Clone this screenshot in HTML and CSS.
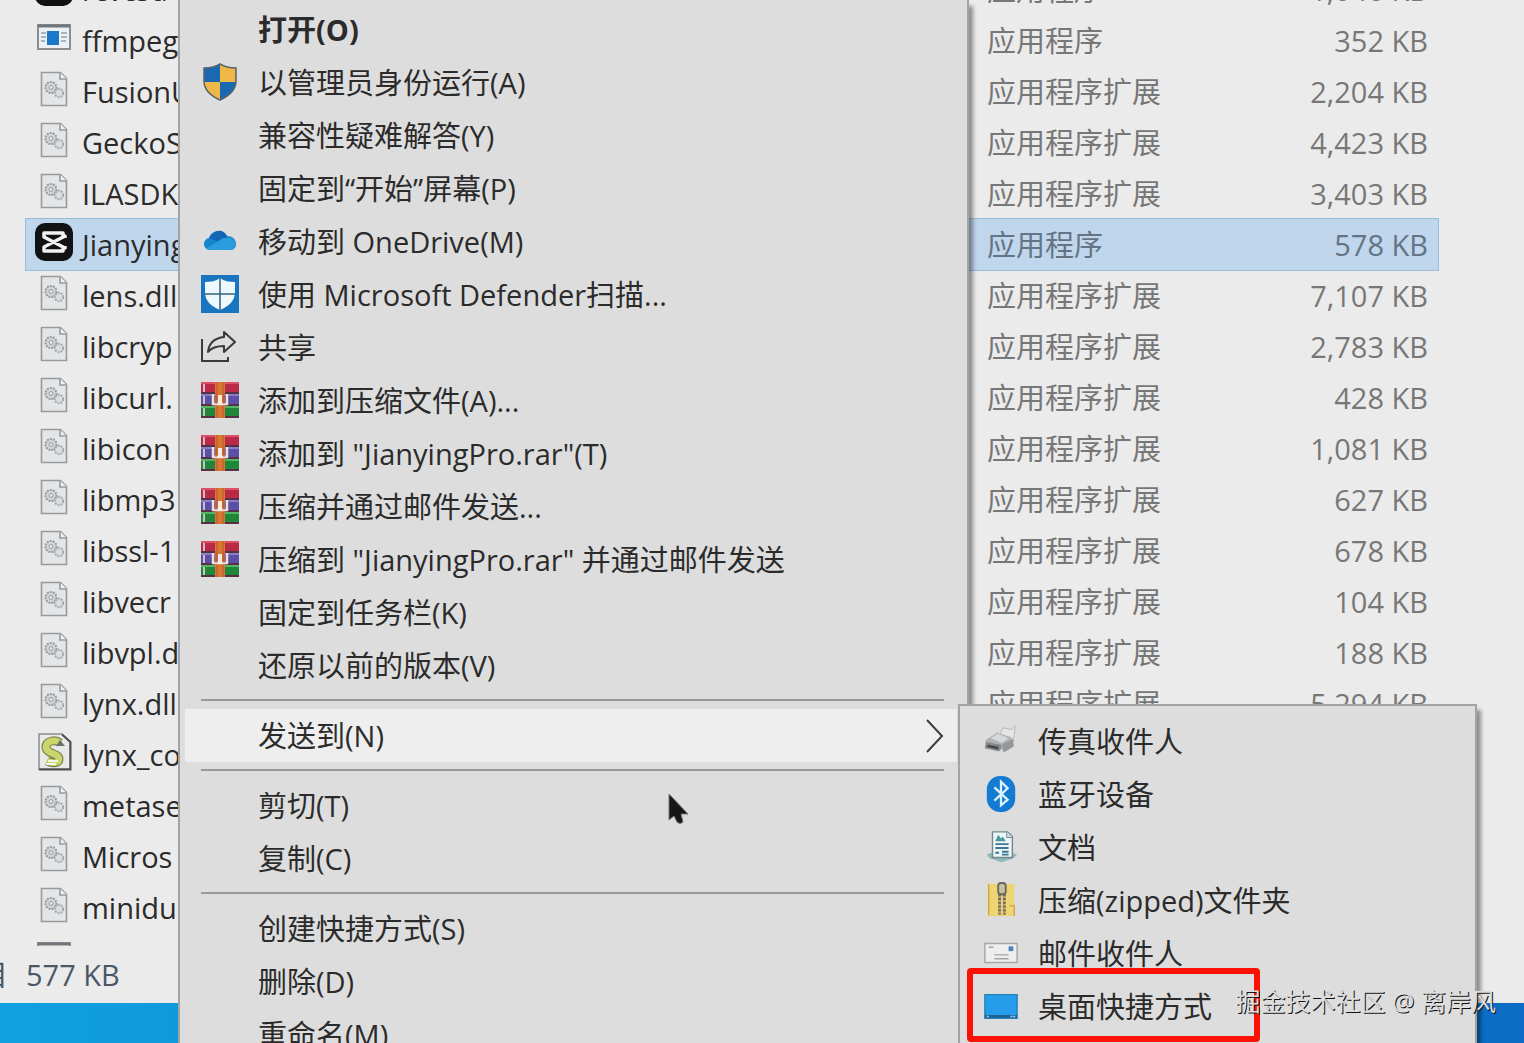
FILE: index.html
```html
<!DOCTYPE html>
<html lang="zh-CN">
<head>
    <title>JianyingPro</title>
    <meta charset="utf-8">
    <link rel="stylesheet" href="styles.css">
</head>
<body>
    <!-- shared icons -->
    <svg class="defs" width="0" height="0" aria-hidden="true">
        <symbol id="dll" viewBox="0 0 38 38">
            <path d="M6.500 2.500h19l6 6v27h-25z" fill="#e4e5e6" stroke="#969a9d" stroke-width="1.600"/>
            <path d="M25 2.500v6.500h6.500" fill="#f1f1f1" stroke="#969a9d" stroke-width="1.600"/>
            <circle cx="16" cy="17.500" r="5.500" fill="#d3d6d8" stroke="#979c9f" stroke-width="2" stroke-dasharray="2 1"/>
            <circle cx="16" cy="17.500" r="2" fill="#e6e6e6" stroke="#979c9f"/>
            <circle cx="24" cy="23" r="4.200" fill="#d9dfe1" stroke="#a2abaf" stroke-width="2" stroke-dasharray="2 1"/>
        </symbol>
        <symbol id="exe" viewBox="0 0 38 38">
            <path d="M3 6h32v24H3z" fill="#edf1f3" stroke="#898e92" stroke-width="2"/>
            <path d="M3 7h32" stroke="#70767b" stroke-width="3"/>
            <path d="M6 14h5M6 18h5M6 22h4M26 14h6M26 18h6M26 22h5" stroke="#92a0ab" stroke-width="1.500"/>
            <path d="M12 12h12v14H12z" fill="#1979c8"/>
        </symbol>
        <symbol id="capcut" viewBox="0 0 38 38">
            <rect width="38" height="38" rx="10" fill="#101214"/>
            <path d="M28 13v-3H9v4l21 11v-2M28 25v3H9v-4l21-11v2" fill="none" stroke="#f2f2f2" stroke-width="3.500" stroke-linejoin="round"/>
        </symbol>
        <symbol id="script" viewBox="0 0 38 38">
            <path d="M4 1h23l8 8v27H4z" fill="#e9eae8" stroke="#8b8e90" stroke-width="1.500"/>
            <path d="M4 36.500h31.500V9L27 1.500" fill="none" stroke="#4d5052" stroke-width="2"/>
            <path d="M25 10c-5-4-14-2-14 4 0 7 13 6 13 12 0 4-6 5-12 2" fill="none" stroke="#7b8553" stroke-width="9"/>
            <path d="M25 10c-5-4-14-2-14 4 0 7 13 6 13 12 0 4-6 5-12 2" fill="none" stroke="#cad66a" stroke-width="6.500"/>
            <path d="M21 13l4-6 5 6z" fill="#6a7166"/>
            <path d="M13 28h10M11 31h10" stroke="#f5f6e9" stroke-width="2"/>
        </symbol>
        <symbol id="rar" viewBox="0 0 38 38">
            <path d="M0 1h38v12H0z" fill="#ba2946"/>
            <path d="M0 13h38v12H0z" fill="#5b50a6"/>
            <path d="M0 25h38v12H0z" fill="#20863a"/>
            <path d="M0 2h38" stroke="#db5268" stroke-width="2"/>
            <path d="M0 14h38" stroke="#8880c4" stroke-width="2"/>
            <path d="M0 26h38" stroke="#55b668" stroke-width="2"/>
            <path d="M0 12h38M0 24h38M0 36h38" stroke="#563044" stroke-width="2"/>
            <path d="M3 3v8M3 15v8M3 27v8" stroke="#d1bbc8" stroke-width="2"/>
            <path d="M14 1h10v36H14z" fill="#d77734"/>
            <path d="M16 1v36M22 1v36" stroke="#bf5728"/>
            <path d="M12 13v10h14V13" fill="none" stroke="#eee1db" stroke-width="2.500"/>
            <path d="M19 14v10" stroke="#f5eae2" stroke-width="4"/>
            <path d="M15 13v10M23 13v10" stroke="#a45a45"/>
        </symbol>
    </svg>

    <main class="window">
        <div class="file-list">
            <table class="files">
                <tr><td class="name"><span class="file"><svg class="icon"><use href="#capcut"/></svg>rcvcsd</span></td><td class="type">应用程序</td><td class="size">1,046 KB</td></tr>
                <tr><td class="name"><span class="file"><svg class="icon"><use href="#exe"/></svg>ffmpeg</span></td><td class="type">应用程序</td><td class="size">352 KB</td></tr>
                <tr><td class="name"><span class="file"><svg class="icon"><use href="#dll"/></svg>FusionU</span></td><td class="type">应用程序扩展</td><td class="size">2,204 KB</td></tr>
                <tr><td class="name"><span class="file"><svg class="icon"><use href="#dll"/></svg>GeckoS</span></td><td class="type">应用程序扩展</td><td class="size">4,423 KB</td></tr>
                <tr><td class="name"><span class="file"><svg class="icon"><use href="#dll"/></svg>ILASDK</span></td><td class="type">应用程序扩展</td><td class="size">3,403 KB</td></tr>
                <tr class="selected"><td class="name"><span class="file"><svg class="icon"><use href="#capcut"/></svg>Jianying</span></td><td class="type">应用程序</td><td class="size">578 KB</td></tr>
                <tr><td class="name"><span class="file"><svg class="icon"><use href="#dll"/></svg>lens.dll</span></td><td class="type">应用程序扩展</td><td class="size">7,107 KB</td></tr>
                <tr><td class="name"><span class="file"><svg class="icon"><use href="#dll"/></svg>libcryp</span></td><td class="type">应用程序扩展</td><td class="size">2,783 KB</td></tr>
                <tr><td class="name"><span class="file"><svg class="icon"><use href="#dll"/></svg>libcurl.</span></td><td class="type">应用程序扩展</td><td class="size">428 KB</td></tr>
                <tr><td class="name"><span class="file"><svg class="icon"><use href="#dll"/></svg>libicon</span></td><td class="type">应用程序扩展</td><td class="size">1,081 KB</td></tr>
                <tr><td class="name"><span class="file"><svg class="icon"><use href="#dll"/></svg>libmp3</span></td><td class="type">应用程序扩展</td><td class="size">627 KB</td></tr>
                <tr><td class="name"><span class="file"><svg class="icon"><use href="#dll"/></svg>libssl-1</span></td><td class="type">应用程序扩展</td><td class="size">678 KB</td></tr>
                <tr><td class="name"><span class="file"><svg class="icon"><use href="#dll"/></svg>libvecr</span></td><td class="type">应用程序扩展</td><td class="size">104 KB</td></tr>
                <tr><td class="name"><span class="file"><svg class="icon"><use href="#dll"/></svg>libvpl.d</span></td><td class="type">应用程序扩展</td><td class="size">188 KB</td></tr>
                <tr><td class="name"><span class="file"><svg class="icon"><use href="#dll"/></svg>lynx.dll</span></td><td class="type">应用程序扩展</td><td class="size">5,294 KB</td></tr>
                <tr><td class="name"><span class="file"><svg class="icon"><use href="#script"/></svg>lynx_co</span></td><td></td><td></td></tr>
                <tr><td class="name"><span class="file"><svg class="icon"><use href="#dll"/></svg>metase</span></td><td></td><td></td></tr>
                <tr><td class="name"><span class="file"><svg class="icon"><use href="#dll"/></svg>Micros</span></td><td></td><td></td></tr>
                <tr><td class="name"><span class="file"><svg class="icon"><use href="#dll"/></svg>minidu</span></td><td></td><td></td></tr>
                <tr><td class="name"><span class="file"><svg class="icon"><use href="#exe"/></svg></span></td><td></td><td></td></tr>
            </table>
        </div>
        <footer class="status-bar"><span>目</span><span>577 KB</span></footer>
    </main>

    <!-- right click menu -->
    <div class="menu context-menu">
        <button class="item default"><span class="label">打开(O)</span></button>
        <button class="item">
            <svg class="icon" viewBox="0 0 38 38">
                <path d="M19 1c5 3 10 4 16 4v13c0 9-7 15-16 19C10 33 3 27 3 18V5c6 0 11-1 16-4z" fill="#efb745"/>
                <path d="M19 1v18H3V5c6 0 11-1 16-4zM19 19h16c-1 9-7 14-16 18z" fill="#1b68b2"/>
                <path d="M19 1c5 3 10 4 16 4v13c0 9-7 15-16 19C10 33 3 27 3 18V5c6 0 11-1 16-4z" fill="none" stroke="#58636a" stroke-width="1.500"/>
            </svg>
            <span class="label">以管理员身份运行(A)</span>
        </button>
        <button class="item"><span class="label">兼容性疑难解答(Y)</span></button>
        <button class="item"><span class="label">固定到“开始”屏幕(P)</span></button>
        <button class="item">
            <svg class="icon" viewBox="0 0 38 38">
                <path d="M10 28a6 6 0 0 1-2-12c2-8 14-10 18-2 5 0 9 3 9 8 0 4-3 6-6 6z" fill="#1685cc"/>
                <path d="M12 12c4-5 11-4 14 2l2 4-10 2-10-4z" fill="#1266b3"/>
                <path d="M6 26l13-8c4-3 9-3 12-1 6 4 4 11-2 11H10c-2 0-3 0-4-2z" fill="#2a9ddd"/>
            </svg>
            <span class="label">移动到 OneDrive(M)</span>
        </button>
        <button class="item">
            <svg class="icon" viewBox="0 0 38 38">
                <path d="M0 0h38v38H0z" fill="#1975bf"/>
                <path d="M19 3c4 3 9 4 15 4v10c0 9-6 14-15 18C10 31 4 26 4 17V7c6 0 11-1 15-4z" fill="#edf9fc"/>
                <path d="M19 3v32M4 19h30" stroke="#35617e" stroke-width="1.500"/>
            </svg>
            <span class="label">使用 Microsoft Defender扫描...</span>
        </button>
        <button class="item">
            <svg class="icon" viewBox="0 0 38 38" fill="none" stroke="#37393b" stroke-width="2">
                <path d="M1 11v22h26v-4"/>
                <path d="M23 4l11 10-11 10v-6c-7 0-12 1-16 6 1-9 7-14 16-15z" stroke-linejoin="round"/>
            </svg>
            <span class="label">共享</span>
        </button>
        <button class="item"><svg class="icon"><use href="#rar"/></svg><span class="label">添加到压缩文件(A)...</span></button>
        <button class="item"><svg class="icon"><use href="#rar"/></svg><span class="label">添加到 "JianyingPro.rar"(T)</span></button>
        <button class="item"><svg class="icon"><use href="#rar"/></svg><span class="label">压缩并通过邮件发送...</span></button>
        <button class="item"><svg class="icon"><use href="#rar"/></svg><span class="label">压缩到 "JianyingPro.rar" 并通过邮件发送</span></button>
        <button class="item"><span class="label">固定到任务栏(K)</span></button>
        <button class="item"><span class="label">还原以前的版本(V)</span></button>
        <hr>
        <button class="item active">
            <span class="label">发送到(N)</span>
            <svg class="chevron" viewBox="0 0 20 34"><path d="M2 1l15 16L2 33" fill="none" stroke="#3c3c3c" stroke-width="2"/></svg>
        </button>
        <hr>
        <button class="item"><span class="label">剪切(T)</span></button>
        <button class="item"><span class="label">复制(C)</span></button>
        <hr>
        <button class="item"><span class="label">创建快捷方式(S)</span></button>
        <button class="item"><span class="label">删除(D)</span></button>
        <button class="item"><span class="label">重命名(M)</span></button>
    </div>

    <!-- send to -->
    <div class="menu send-menu">
        <button class="item">
            <svg class="icon" viewBox="0 0 38 38">
                <path d="M17 14l4-9 9 2 4-4-2 16-8 5z" fill="#e6e6e6" stroke="#b3b5b6"/>
                <path d="M3 18l12-8 15 5 3 9-9 6L3 26z" fill="#aeb0b1"/>
                <path d="M8 16l8-5 11 5-7 5z" fill="#d6d7d8"/>
                <path d="M3 20l16 3v8L2 27z" fill="#85888a"/>
                <path d="M5 23l11 2v3L4 25z" fill="#424648"/>
                <path d="M3 28l14 3 3-3" fill="none" stroke="#d7d8d8" stroke-width="2"/>
                <path d="M20 23l12-6v8l-10 6z" fill="#949799"/>
            </svg>
            <span class="label">传真收件人</span>
        </button>
        <button class="item">
            <svg class="icon" viewBox="0 0 38 38">
                <rect x="4" width="30" height="38" rx="14" fill="#147bd2"/>
                <path d="M12 12l14 13-7 6V6l7 7-14 13" fill="none" stroke="#dbf2fc" stroke-width="2.400"/>
            </svg>
            <span class="label">蓝牙设备</span>
        </button>
        <button class="item">
            <svg class="icon" viewBox="0 0 38 38">
                <path d="M4 27l5-2h21l6 2-4 4-12 4-13-4z" fill="#91b6b9"/>
                <path d="M10 3h16l5 5v22H10z" fill="#edf6f6" stroke="#74898f" stroke-width="1.500"/>
                <path d="M25 3v6h6" fill="#cbdde0" stroke="#74898f"/>
                <path d="M13 13l3-7 3 4 2-2 3 5z" fill="#4b9a9b"/>
                <path d="M13 16h14M13 20h14M20 24h7M20 27h7M13 25h4" stroke="#3e788f" stroke-width="2"/>
            </svg>
            <span class="label">文档</span>
        </button>
        <button class="item">
            <svg class="icon" viewBox="0 0 38 38">
                <path d="M5 2h28v34H5z" fill="#eed574"/>
                <path d="M6 2v33M28 25h5v11" fill="none" stroke="#cda94c" stroke-width="1.500"/>
                <path d="M16 2h8v33h-8z" fill="#bba665"/>
                <path d="M20 5v29" stroke="#706b5b" stroke-width="8" stroke-dasharray="2 2"/>
                <path d="M20 4v31" stroke="#e6d18a" stroke-width="2"/>
                <rect x="16" y="1" width="8" height="12" rx="3" fill="#c8c0a0" stroke="#696760" stroke-width="2"/>
            </svg>
            <span class="label">压缩(zipped)文件夹</span>
        </button>
        <button class="item">
            <svg class="icon" viewBox="0 0 38 38">
                <path d="M2 9h34v20H2z" fill="#eeeeed" stroke="#a4a8ab" stroke-width="1.500"/>
                <path d="M6 13h5M12 21h15M12 25h15" stroke="#a0a4a9" stroke-width="1.500"/>
                <path d="M27 12h5v5h-5z" fill="#4c82bb"/>
            </svg>
            <span class="label">邮件收件人</span>
        </button>
        <button class="item">
            <svg class="icon" viewBox="0 0 38 38">
                <path d="M2 7h34v25H2z" fill="#259deb" stroke="#2481b8" stroke-width="1.500"/>
                <path d="M2 30h34" stroke="#1b618f" stroke-width="3"/>
                <path d="M4 30h3M29 30h6" stroke="#a1daf2" stroke-width="1.500" stroke-dasharray="2 1"/>
            </svg>
            <span class="label">桌面快捷方式</span>
        </button>
    </div>

    <div class="highlight-box"></div>
    <svg class="cursor" viewBox="0 0 22 32"><path d="M2 1v26l5-4 3 6q3 3 6 0l-2-8h7z" fill="#161616" stroke="#777" stroke-width="1"/></svg>
    <p class="watermark">掘金技术社区 @ 离岸风</p>
</body>
</html>
```
FILE: styles.css
```css
* {
    box-sizing: border-box;
}

body {
    position: relative;
    height: 100vh;
    margin: 0;
    overflow: hidden;
    font-family: "Open Sans", "Noto Sans CJK SC", sans-serif;
    font-size: 29px;
    line-height: 36px;
    color: #2b2b2b;
    background: linear-gradient(90deg, #10a0e1, #0c6cc5);
}

.defs {
    position: absolute;
}

.icon {
    width: 38px;
    height: 38px;
}

/* explorer window */
.window {
    display: flex;
    flex-direction: column;
    height: calc(100vh - 40px);
    background: #ebebeb;
}

.file-list {
    flex: 1;
    min-height: 0;
    overflow: hidden;
    padding: 0 86px 0 26px;
}

.files {
    width: 100%;
    margin-top: -36px;
    border-spacing: 0;
    table-layout: fixed;
}

.files td {
    height: 51px;
    padding: 0;
    white-space: nowrap;
}

.files .name {
    width: 950px;
    padding-left: 9px;
}

.file {
    display: flex;
    align-items: center;
    gap: 9px;
}

.file .icon {
    margin-bottom: 6px;
}

.files .type {
    padding-left: 11px;
    color: #777;
}

.files .size {
    padding-right: 10px;
    text-align: right;
    color: #777;
}

.files .selected {
    background: #bfd6ec;
    outline: 1px solid #98bddb;
}

.files .selected .type,
.files .selected .size {
    color: #647485;
}

.status-bar {
    display: flex;
    align-items: center;
    gap: 18px;
    height: 57px;
    margin-left: -21px;
    color: #4b5765;
}

/* menus */
.menu {
    position: absolute;
    bottom: 0;
    overflow: hidden;
    background: #ddd;
    border: 2px solid #a3a3a3;
    border-bottom: 0;
    box-shadow: 4px 6px 4px #0006;
}

.context-menu {
    top: 0;
    left: 178px;
    width: 791px;
    padding: 3px 10px 0 5px;
    border-top: 0;
}

.send-menu {
    top: 704px;
    left: 958px;
    width: 519px;
    padding: 9px 5px 0 7px;
}

.item {
    display: grid;
    grid-template-columns: 38px 1fr auto;
    align-items: center;
    column-gap: 19px;
    width: 100%;
    height: 53px;
    padding: 0 12px 0 16px;
    border: 0;
    background: none;
    font: inherit;
    color: inherit;
    text-align: left;
    white-space: nowrap;
}

.item:hover,
.item.active {
    background: #eee;
}

.item.default {
    font-weight: bold;
}

.item .icon {
    margin-bottom: 2px;
}

.item .label {
    grid-column: 2;
}

.send-menu .item {
    grid-template-columns: 36px 1fr;
}

.send-menu .icon {
    width: 36px;
    height: 36px;
}

.chevron {
    width: 20px;
    height: 34px;
}

.menu hr {
    height: 2px;
    margin: 7px 13px 8px 16px;
    border: 0;
    background: #999;
}

/* overlays */
.highlight-box {
    position: absolute;
    top: 968px;
    left: 967px;
    width: 293px;
    height: 74px;
    border: 6px solid #fb1205;
    border-radius: 4px;
}

.cursor {
    position: absolute;
    top: 793px;
    left: 667px;
    width: 22px;
    height: 32px;
}

.watermark {
    position: absolute;
    right: 28px;
    bottom: 24px;
    margin: 0;
    font-size: 25px;
    color: #ddd;
    text-shadow: 1px 1px 0 #111;
}
```
